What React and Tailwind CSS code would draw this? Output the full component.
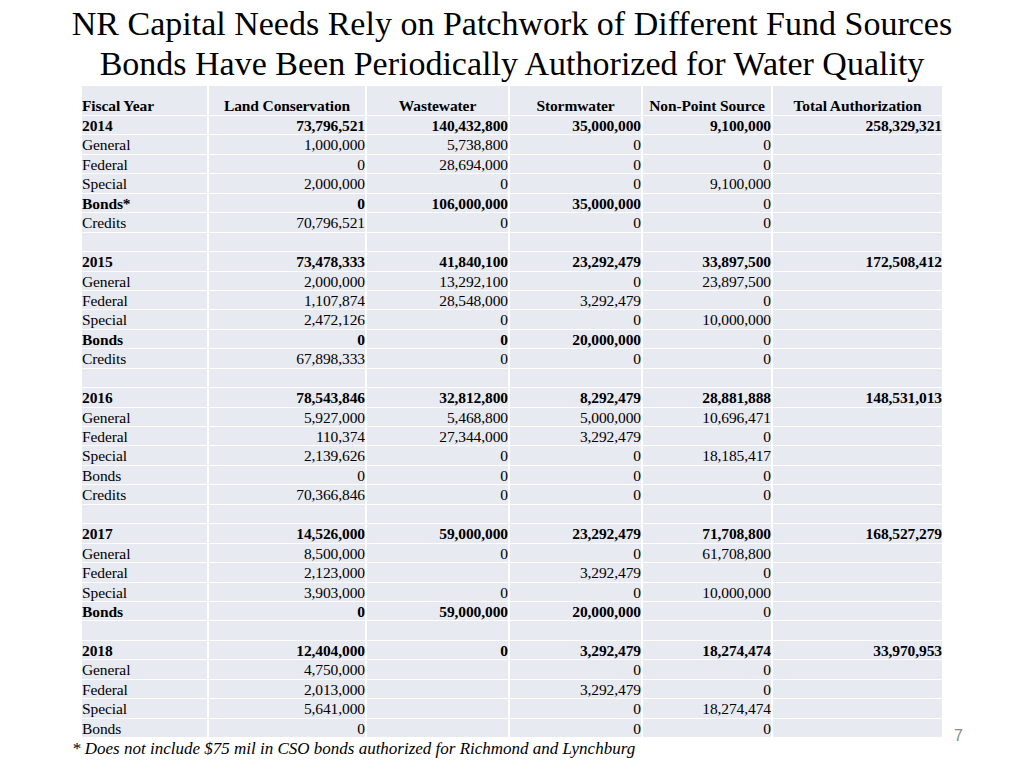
import React from "react";

const cols = ["Land Conservation", "Wastewater", "Stormwater", "Non-Point Source", "Total Authorization"];

// [label, values[], bold kind] ; values: land, waste, storm, nps, total
const rows = [
	["2014", ["73,796,521", "140,432,800", "35,000,000", "9,100,000", "258,329,321"], "all"],
	["General", ["1,000,000", "5,738,800", "0", "0", ""]],
	["Federal", ["0", "28,694,000", "0", "0", ""]],
	["Special", ["2,000,000", "0", "0", "9,100,000", ""]],
	["Bonds*", ["0", "106,000,000", "35,000,000", "0", ""], "bonds"],
	["Credits", ["70,796,521", "0", "0", "0", ""]],
	null,
	["2015", ["73,478,333", "41,840,100", "23,292,479", "33,897,500", "172,508,412"], "all"],
	["General", ["2,000,000", "13,292,100", "0", "23,897,500", ""]],
	["Federal", ["1,107,874", "28,548,000", "3,292,479", "0", ""]],
	["Special", ["2,472,126", "0", "0", "10,000,000", ""]],
	["Bonds", ["0", "0", "20,000,000", "0", ""], "bonds"],
	["Credits", ["67,898,333", "0", "0", "0", ""]],
	null,
	["2016", ["78,543,846", "32,812,800", "8,292,479", "28,881,888", "148,531,013"], "all"],
	["General", ["5,927,000", "5,468,800", "5,000,000", "10,696,471", ""]],
	["Federal", ["110,374", "27,344,000", "3,292,479", "0", ""]],
	["Special", ["2,139,626", "0", "0", "18,185,417", ""]],
	["Bonds", ["0", "0", "0", "0", ""]],
	["Credits", ["70,366,846", "0", "0", "0", ""]],
	null,
	["2017", ["14,526,000", "59,000,000", "23,292,479", "71,708,800", "168,527,279"], "all"],
	["General", ["8,500,000", "0", "0", "61,708,800", ""]],
	["Federal", ["2,123,000", "", "3,292,479", "0", ""]],
	["Special", ["3,903,000", "0", "0", "10,000,000", ""]],
	["Bonds", ["0", "59,000,000", "20,000,000", "0", ""], "bonds"],
	null,
	["2018", ["12,404,000", "0", "3,292,479", "18,274,474", "33,970,953"], "all"],
	["General", ["4,750,000", "", "0", "0", ""]],
	["Federal", ["2,013,000", "", "3,292,479", "0", ""]],
	["Special", ["5,641,000", "", "0", "18,274,474", ""]],
	["Bonds", ["0", "", "0", "0", ""]],
];

const grid = "grid grid-cols-[125px_156px_141px_131px_128px_169px] gap-x-[2px]";
const cell = "bg-[#e8eaf2] h-[18.45px] leading-[18.45px] pt-[1px] overflow-hidden whitespace-nowrap";

function Row({ row }) {
	if (!row) {
		return (
			<div className={grid}>
				{[0, 1, 2, 3, 4, 5].map((i) => (
					<div key={i} className={cell}></div>
				))}
			</div>
		);
	}
	const [label, vals, kind] = row;
	return (
		<div className={grid}>
			<div className={`${cell} ${kind ? "font-bold" : ""}`}>{label}</div>
			{vals.map((v, i) => {
				const bold = kind === "all" || (kind === "bonds" && i < 3);
				return (
					<div key={i} className={`${cell} text-right ${bold ? "font-bold" : ""}`}>
						{v}
					</div>
				);
			})}
		</div>
	);
}

export default function App() {
	return (
		<div className="w-[1024px] h-[768px] bg-white text-black overflow-hidden" style={{ fontFamily: '"Liberation Serif", "Times New Roman", serif' }}>
			{/* Title */}
			<div className="pt-[4px] text-center text-[34px] leading-[40px] h-[86px] whitespace-nowrap">
				<div>NR Capital Needs Rely on Patchwork of Different Fund Sources</div>
				<div>Bonds Have Been Periodically Authorized for Water Quality</div>
			</div>

			{/* Table */}
			<div className="pl-[82px] flex items-end gap-[12px]">
				<div className="flex flex-col gap-y-px text-[15.5px] tracking-[-0.1px]">
					<div className={grid}>
						<div className="bg-[#e8eaf2] h-[29px] flex items-end pb-0 font-bold leading-[18px]">Fiscal Year</div>
						{cols.map((c) => (
							<div key={c} className="bg-[#e8eaf2] h-[29px] flex items-end justify-center pb-0 font-bold leading-[18px] whitespace-nowrap">
								{c}
							</div>
						))}
					</div>
					{rows.map((r, i) => (
						<Row key={i} row={r} />
					))}
				</div>
				<div className="text-[16px] text-[#8c8c8c] leading-[16px] mb-[-7px]" style={{ fontFamily: '"Liberation Sans", Arial, sans-serif' }}>
					7
				</div>
			</div>

			{/* Footnote */}
			<div className="pl-[72px] pt-[2px] italic text-[17px] leading-[20px] whitespace-nowrap">
				* Does not include $75 mil in CSO bonds authorized for Richmond and Lynchburg
			</div>
		</div>
	);
}
